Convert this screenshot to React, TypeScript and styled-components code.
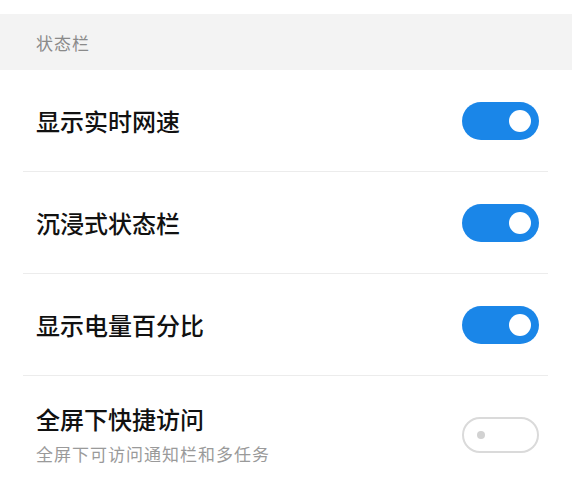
import React from "react";
import styled, { createGlobalStyle } from "styled-components";

const Global = createGlobalStyle`
  html, body { margin: 0; padding: 0; background: #ffffff; }
  body { font-family: "Noto Sans CJK SC", "Noto Sans", sans-serif; }
  * { box-sizing: border-box; }
`;

const Page = styled.div`
  width: 572px;
  height: 491px;
  overflow: hidden;
  background: #ffffff;
  padding-top: 14px;
`;

const SectionHeader = styled.div`
  height: 56px;
  background: #f3f3f3;
  display: flex;
  align-items: center;
  padding-left: 36px;
  font-size: 17px;
  letter-spacing: 1px;
  color: #8a8a8a;
`;

const List = styled.div`
  padding: 0 24px 0 23px;
`;

const Row = styled.div<{ $tall?: boolean; $last?: boolean }>`
  display: flex;
  align-items: center;
  justify-content: space-between;
  height: ${(p) => (p.$tall ? "117px" : "102px")};
  padding: 0 9px 0 13px;
  border-bottom: ${(p) => (p.$last ? "none" : "1px solid #ececec")};
`;

const TextBlock = styled.div`
  display: flex;
  flex-direction: column;
`;

const Title = styled.div`
  font-size: 24px;
  line-height: 34px;
  font-weight: 500;
  color: #111111;
`;

const Subtitle = styled.div`
  font-size: 17px;
  line-height: 26px;
  letter-spacing: 1px;
  color: #9a9a9a;
  margin-top: 5px;
`;

const Track = styled.div<{ $on: boolean }>`
  width: 77px;
  height: ${(p) => (p.$on ? "38px" : "36px")};
  border-radius: 19px;
  display: flex;
  align-items: center;
  justify-content: ${(p) => (p.$on ? "flex-end" : "flex-start")};
  padding: ${(p) => (p.$on ? "0 8px" : "0 0 0 13px")};
  background: ${(p) => (p.$on ? "#1a86e8" : "#ffffff")};
  border: ${(p) => (p.$on ? "none" : "2.5px solid #dadada")};
  flex-shrink: 0;
`;

const Knob = styled.div<{ $on: boolean }>`
  width: ${(p) => (p.$on ? "22px" : "8px")};
  height: ${(p) => (p.$on ? "22px" : "8px")};
  border-radius: 50%;
  background: ${(p) => (p.$on ? "#ffffff" : "#d2d2d2")};
`;

const Toggle = ({ on }: { on: boolean }) => (
  <Track $on={on}>
    <Knob $on={on} />
  </Track>
);

type Item = { title: string; subtitle?: string; on: boolean };

const items: Item[] = [
  { title: "显示实时网速", on: true },
  { title: "沉浸式状态栏", on: true },
  { title: "显示电量百分比", on: true },
  { title: "全屏下快捷访问", subtitle: "全屏下可访问通知栏和多任务", on: false },
];

export default function App() {
  return (
    <>
      <Global />
      <Page>
        <SectionHeader>状态栏</SectionHeader>
        <List>
          {items.map((it, i) => (
            <Row key={it.title} $tall={!!it.subtitle} $last={i === items.length - 1}>
              <TextBlock>
                <Title>{it.title}</Title>
                {it.subtitle && <Subtitle>{it.subtitle}</Subtitle>}
              </TextBlock>
              <Toggle on={it.on} />
            </Row>
          ))}
        </List>
      </Page>
    </>
  );
}
